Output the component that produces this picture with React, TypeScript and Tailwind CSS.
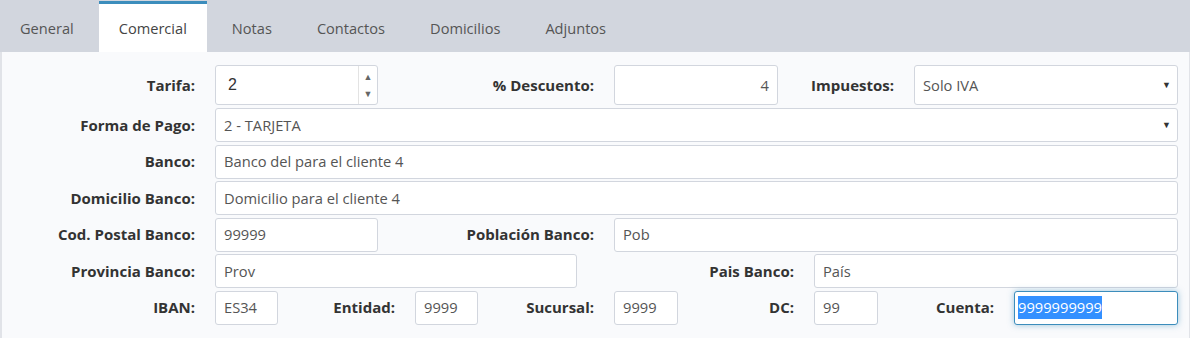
const tabs = ['General', 'Comercial', 'Notas', 'Contactos', 'Domicilios', 'Adjuntos'];

const Label = ({ text, w }: { text: string; w: number }) => (
  <div
    className="flex items-center justify-end pr-[20px] text-[15px] font-bold text-[#333] shrink-0"
    style={{ width: w }}
  >
    {text}
  </div>
);

const Field = ({
  value,
  w,
  align = 'left',
}: {
  value?: string;
  w: number;
  align?: 'left' | 'right';
}) => (
  <div
    className={`flex items-center h-full bg-white border border-[#d2d6de] rounded-[3px] px-[8px] text-[14.7px] text-[#555] shrink-0 ${
      align === 'right' ? 'justify-end' : ''
    }`}
    style={{ width: w }}
  >
    {value}
  </div>
);

const Select = ({ value, w }: { value: string; w: number }) => (
  <div
    className="flex items-center justify-between h-full bg-white border border-[#d2d6de] rounded-[3px] pl-[8px] pr-[6px] text-[14.7px] text-[#555] shrink-0"
    style={{ width: w }}
  >
    <span>{value}</span>
    <span className="text-[9px] text-[#333]">▼</span>
  </div>
);

export default function App() {
  return (
    <div className="w-[1193px] h-[338px] bg-white overflow-hidden" style={{ fontFamily: '"Open Sans", "Liberation Sans", sans-serif' }}>
      <div className="w-[1190px]">
        {/* tabs */}
        <div className="flex h-[52px] bg-[#d2d6de] pt-[1px]">
          {tabs.map((t) => (
            <div
              key={t}
              className={`mr-[5px] px-[20px] flex items-center pt-[2px] text-[14.6px] border-t-[3px] ${
                t === 'Comercial'
                  ? 'bg-white border-[#3c8dbc] text-[#444]'
                  : 'border-transparent text-[#555]'
              }`}
            >
              {t}
            </div>
          ))}
        </div>

        {/* body */}
        <div className="bg-[#f9fafc] border-l-2 border-r border-[#e1e3e8] h-[286px] pt-[13px]">
          <div className="flex flex-col gap-[2.5px] -ml-[2px]">
            <div className="flex h-[40px] mb-[0.5px]">
              <Label text="Tarifa:" w={215} />
              <div className="flex h-full w-[163px] bg-white border border-[#d2d6de] rounded-[3px] shrink-0">
                <div className="flex-1 flex items-center pl-[12px] text-[16px] text-[#333]" style={{ fontFamily: '"Liberation Sans", Arial, sans-serif' }}>
                  2
                </div>
                <div className="w-[19px] border-l border-[#e3e3e3] flex flex-col items-center justify-center gap-[8px] text-[9px] text-[#666] leading-none">
                  <span>▲</span>
                  <span>▼</span>
                </div>
              </div>
              <Label text="% Descuento:" w={236} />
              <Field value="4" w={164} align="right" />
              <Label text="Impuestos:" w={136} />
              <Select value="Solo IVA" w={264} />
            </div>

            <div className="flex h-[34px]">
              <Label text="Forma de Pago:" w={215} />
              <Select value="2 - TARJETA" w={963} />
            </div>

            <div className="flex h-[34px]">
              <Label text="Banco:" w={215} />
              <Field value="Banco del para el cliente 4" w={963} />
            </div>

            <div className="flex h-[34px]">
              <Label text="Domicilio Banco:" w={215} />
              <Field value="Domicilio para el cliente 4" w={963} />
            </div>

            <div className="flex h-[34px]">
              <Label text="Cod. Postal Banco:" w={215} />
              <Field value="99999" w={163} />
              <Label text="Población Banco:" w={236} />
              <Field value="Pob" w={564} />
            </div>

            <div className="flex h-[34px]">
              <Label text="Provincia Banco:" w={215} />
              <Field value="Prov" w={362} />
              <Label text="Pais Banco:" w={237} />
              <Field value="País" w={364} />
            </div>

            <div className="flex h-[34px]">
              <Label text="IBAN:" w={215} />
              <Field value="ES34" w={63} />
              <Label text="Entidad:" w={137} />
              <Field value="9999" w={63} />
              <Label text="Sucursal:" w={136} />
              <Field value="9999" w={64} />
              <Label text="DC:" w={136} />
              <Field value="99" w={64} />
              <Label text="Cuenta:" w={136} />
              <div className="flex items-center h-full w-[164px] bg-white border border-[#3c8dbc] rounded-[3px] pl-[3px] text-[14.7px] shrink-0 shadow-[0_0_6px_rgba(60,141,188,0.5)]">
                <span className="bg-[#3390ff] text-white">9999999999</span>
              </div>
            </div>
          </div>
        </div>
      </div>
    </div>
  );
}
